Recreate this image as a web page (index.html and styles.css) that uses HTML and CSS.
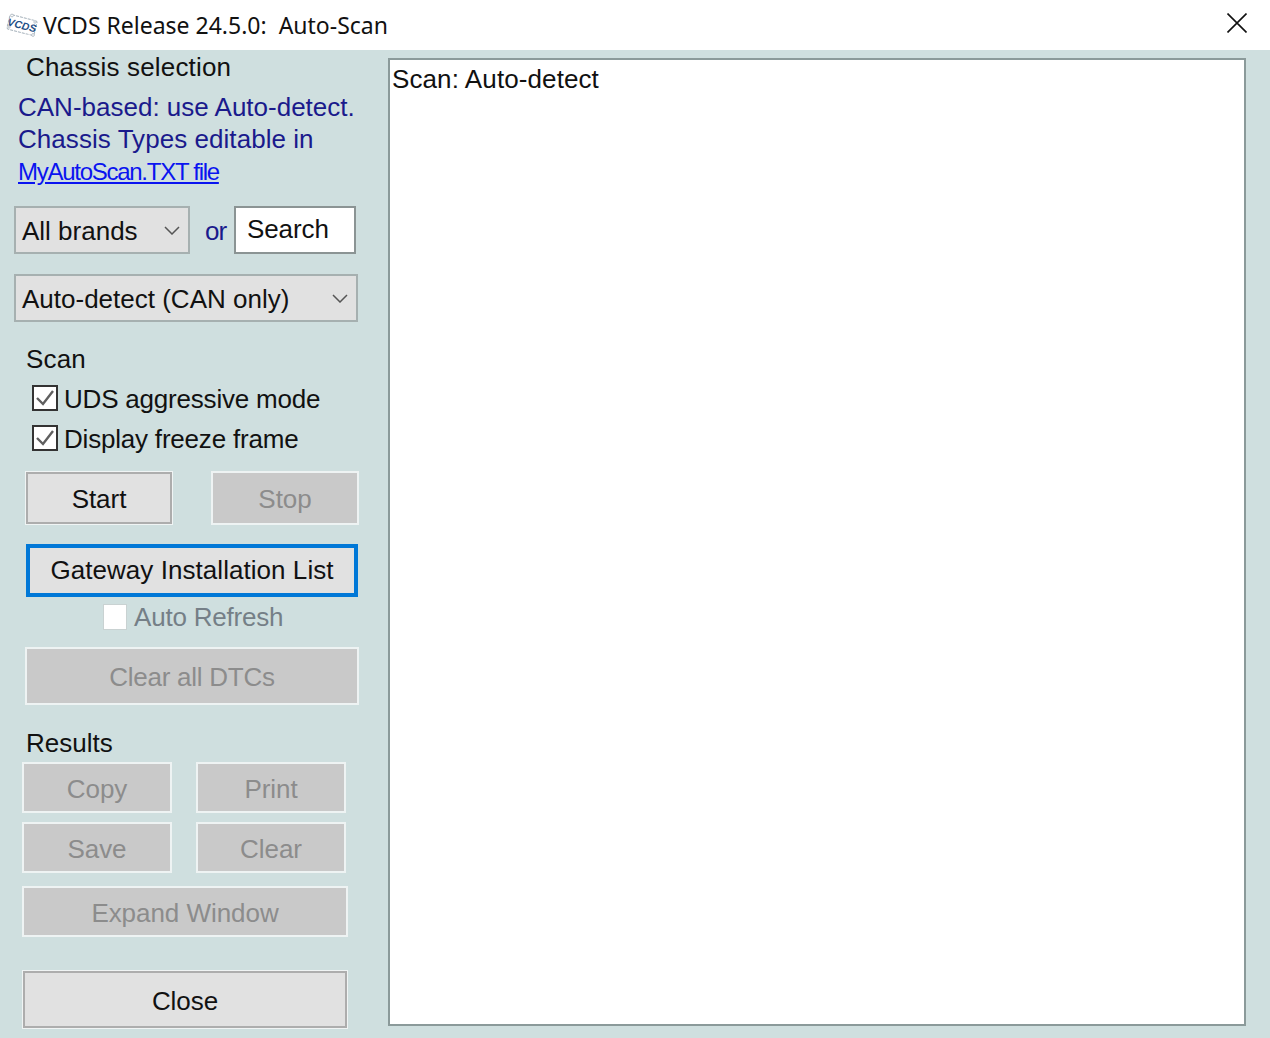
FILE: index.html
```html
<!DOCTYPE html>
<html lang="en">
<head>
<meta charset="utf-8">
<title>VCDS Release 24.5.0: Auto-Scan</title>
<link rel="stylesheet" href="styles.css">
</head>
<body>
<div class="window">
  <header class="titlebar">
    <svg class="logo" viewBox="0 0 32 26" width="32" height="26" aria-hidden="true">
      <g transform="rotate(14 16 13)">
        <rect x="2" y="5.5" width="28" height="15" rx="2" fill="#fff" stroke="#a9b4bd" stroke-width="1" stroke-dasharray="3 1"/>
        <text x="16" y="17" text-anchor="middle" class="logo-text">VCDS</text>
      </g>
      <circle cx="6" cy="3.5" r="1.4" fill="#fff" stroke="#a9b4bd" stroke-width=".8"/>
      <circle cx="27" cy="23" r="1.4" fill="#fff" stroke="#a9b4bd" stroke-width=".8"/>
      <circle cx="3" cy="15" r="1.2" fill="#fff" stroke="#a9b4bd" stroke-width=".8"/>
      <circle cx="29" cy="10" r="1.2" fill="#fff" stroke="#a9b4bd" stroke-width=".8"/>
    </svg>
    <span class="title">VCDS Release 24.5.0:&nbsp; Auto-Scan</span>
    <svg class="close-x" viewBox="0 0 20 20" width="20" height="20" aria-hidden="true">
      <path d="M0.5 0.5 L19.5 19.5 M19.5 0.5 L0.5 19.5" stroke="#111" stroke-width="1.6" fill="none"/>
    </svg>
  </header>
  <main class="body">
    <aside class="side">
      <div class="heading h-chassis">Chassis selection</div>
      <div class="note n1">CAN-based: use Auto-detect.</div>
      <div class="note n2">Chassis Types editable in</div>
      <a class="link" href="#">MyAutoScan.TXT file</a>

      <div class="brand-row">
        <div class="select brands"><span class="select-text">All brands</span><svg class="chev" viewBox="0 0 16 9" width="16" height="9"><path d="M1 1 L8 8 L15 1" fill="none" stroke="#555" stroke-width="1.5"/></svg></div>
        <span class="or">or</span>
        <div class="search">Search</div>
      </div>
      <div class="select chassis"><span class="select-text">Auto-detect (CAN only)</span><svg class="chev" viewBox="0 0 16 9" width="16" height="9"><path d="M1 1 L8 8 L15 1" fill="none" stroke="#555" stroke-width="1.5"/></svg></div>

      <div class="heading h-scan">Scan</div>
      <label class="check c1"><span class="box"><svg viewBox="0 0 22 22" width="22" height="22"><path d="M3 11 L9 17 L19 4" fill="none" stroke="#5f5f5f" stroke-width="2.4"/></svg></span><span class="check-text">UDS aggressive mode</span></label>
      <label class="check c2"><span class="box"><svg viewBox="0 0 22 22" width="22" height="22"><path d="M3 11 L9 17 L19 4" fill="none" stroke="#5f5f5f" stroke-width="2.4"/></svg></span><span class="check-text">Display freeze frame</span></label>

      <div class="pair start-row">
        <button class="btn">Start</button>
        <button class="btn off">Stop</button>
      </div>
      <button class="btn focus">Gateway Installation List</button>
      <label class="check auto"><span class="box blank"></span><span class="check-text">Auto Refresh</span></label>
      <button class="btn off dtc">Clear all DTCs</button>

      <div class="heading h-results">Results</div>
      <div class="grid">
        <button class="btn off low">Copy</button>
        <button class="btn off low">Print</button>
        <button class="btn off low">Save</button>
        <button class="btn off low">Clear</button>
      </div>
      <button class="btn off low expand">Expand Window</button>
      <button class="btn low close">Close</button>
    </aside>
    <section class="output">Scan: Auto-detect</section>
  </main>
</div>
</body>
</html>
```
FILE: styles.css
```css
* { box-sizing: border-box; }
html, body { margin: 0; padding: 0; }
body {
  width: 1270px;
  height: 1038px;
  overflow: hidden;
  font-family: "Liberation Sans", Arial, sans-serif;
  font-size: 26px;
  color: #111;
  background: #cfdfdf;
}
.window { display: flex; flex-direction: column; height: 1038px; }

.titlebar {
  height: 50px;
  background: #fff;
  display: flex;
  align-items: center;
  padding: 0 23px 0 6px;
  flex: none;
}
.logo { flex: none; margin-top: -1px; }
.logo-text { font: italic bold 10.5px "Liberation Sans", sans-serif; fill: #1f4f86; }
.title { margin-left: 5px; font-family: "Noto Sans", sans-serif; font-size: 23px; line-height: 50px; color: #111; }
.close-x { margin-left: auto; margin-top: -4px; }

.body { display: flex; flex: 1; min-height: 0; }
.side { width: 388px; flex: none; display: flex; flex-direction: column; align-items: flex-start; }
.output {
  width: 858px;
  height: 968px;
  margin-top: 8px;
  background: #fff;
  border: 2px solid #8b9a9a;
  padding: 2px 2px;
  font-size: 26px;
  line-height: 34px;
  letter-spacing: 0.1px;
}

.heading { line-height: 32px; margin-left: 26px; letter-spacing: 0.17px; }
.h-chassis { margin-top: 1px; }
.h-scan { margin-top: 21px; }
.h-results { margin-top: 22px; letter-spacing: 0; }

.note { color: #1a1a8c; margin-left: 18px; line-height: 32px; }
.n1 { margin-top: 8px; }
.n2 { letter-spacing: 0.05px; }
.link {
  display: block;
  margin: 1px 0 0 18px;
  color: #0a14f0;
  font-size: 24px;
  line-height: 32px;
  letter-spacing: -1.27px;
}

.brand-row { display: flex; align-items: center; margin: 18px 0 0 14px; }
.select {
  height: 48px;
  background: #e1e1e1;
  border: 2px solid #a6b0b0;
  display: flex;
  align-items: center;
  justify-content: space-between;
  padding: 0 8px 0 6px;
}
.select-text { padding-top: 2px; }
.brands { width: 176px; }
.or { color: #1a1a8c; margin: 0 8px 0 15px; width: 21px; height: 48px; padding-top: 2px; line-height: 46px; letter-spacing: -1px; }
.search {
  width: 122px;
  height: 48px;
  background: #fff;
  border: 2px solid #8b9494;
  padding-left: 11px;
  line-height: 42px;
  letter-spacing: -0.1px;
}
.chassis { width: 344px; margin: 20px 0 0 14px; }

.check { display: flex; align-items: center; height: 30px; letter-spacing: -0.2px; }
.check-text { padding-top: 2px; }
.box {
  width: 26px;
  height: 26px;
  flex: none;
  margin-right: 6px;
  background: #fff;
  border: 2px solid #333;
  display: flex;
  align-items: center;
  justify-content: center;
}
.box.blank { width: 24px; height: 26px; margin-right: 7px; border: 1px solid #c9d2d2; }
.c1 { margin: 8px 0 0 32px; }
.c2 { margin: 10px 0 0 32px; }

.btn {
  display: block;
  font: inherit;
  letter-spacing: -0.05px;
  color: #111;
  padding: 2px 0 0;
  background: #e1e1e1;
  border: 1px solid #f0f4f4;
  box-shadow: inset 0 0 0 2px #adadad;
}
.btn.off {
  background: #c9c9c9;
  color: #8c8c8c;
  border: 2px solid #eef3f3;
  box-shadow: none;
}
.btn.low { padding-top: 4px; }
.pair { display: flex; gap: 38px; margin: 18px 0 0 25px; }
.pair .btn { width: 148px; height: 54px; }
.focus {
  width: 332px;
  height: 53px;
  margin: 19px 0 0 26px;
  padding: 0;
  border: 4px solid #0078d7;
  box-shadow: none;
  letter-spacing: 0.05px;
}
.auto { margin: 5px 0 0 103px; color: #757f87; }
.auto .check-text { padding-top: 0; }
.dtc { width: 334px; height: 58px; margin: 15px 0 0 25px; letter-spacing: -0.25px; }

.grid {
  display: grid;
  grid-template-columns: 150px 150px;
  grid-auto-rows: 51px;
  column-gap: 24px;
  row-gap: 9px;
  margin: 3px 0 0 22px;
}
.expand { width: 326px; height: 51px; margin: 13px 0 0 22px; }
.close { width: 326px; height: 59px; margin: 33px 0 0 22px; }
```
